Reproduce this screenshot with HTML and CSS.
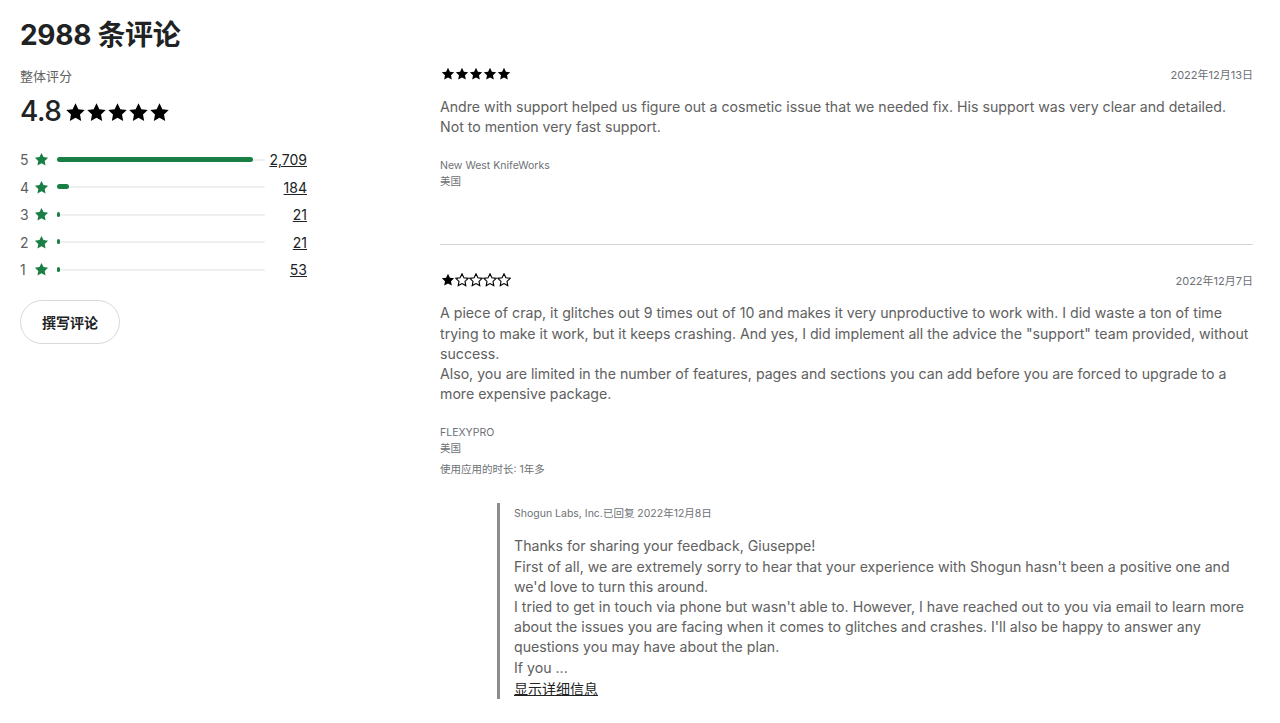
FILE: index.html
```html
<!DOCTYPE html>
<html lang="zh-CN">
<head>
    <meta charset="UTF-8">
    <title>2988 条评论</title>
    <link rel="stylesheet" href="styles.css">
</head>
<body>
    <svg width="0" height="0" class="defs">
        <defs>
            <path id="star" d="M10 1.2l2.7 5.6 6.1.8-4.5 4.3 1.1 6.1L10 15.1 4.6 18l1.1-6.1-4.5-4.3 6.1-.8z"/>
        </defs>
    </svg>

    <div class="page">
        <!-- 左侧：总评分 -->
        <div class="summary">
            <h1 class="title">2988 条评论</h1>
            <p class="overall-label">整体评分</p>
            <div class="overall">
                <span class="score">4.8</span>
                <span class="big-stars">
                    <svg viewBox="0 0 20 20"><use href="#star"/></svg>
                    <svg viewBox="0 0 20 20"><use href="#star"/></svg>
                    <svg viewBox="0 0 20 20"><use href="#star"/></svg>
                    <svg viewBox="0 0 20 20"><use href="#star"/></svg>
                    <svg viewBox="0 0 20 20"><use href="#star"/></svg>
                </span>
            </div>

            <ul class="bars">
                <li class="bar-row">
                    <span class="bar-num">5</span>
                    <svg class="bar-star" viewBox="0 0 20 20"><use href="#star"/></svg>
                    <span class="track"><span class="fill" style="width: 94%"></span></span>
                    <a class="bar-count" href="#">2,709</a>
                </li>
                <li class="bar-row">
                    <span class="bar-num">4</span>
                    <svg class="bar-star" viewBox="0 0 20 20"><use href="#star"/></svg>
                    <span class="track"><span class="fill" style="width: 6%"></span></span>
                    <a class="bar-count" href="#">184</a>
                </li>
                <li class="bar-row">
                    <span class="bar-num">3</span>
                    <svg class="bar-star" viewBox="0 0 20 20"><use href="#star"/></svg>
                    <span class="track"><span class="fill" style="width: 1px"></span></span>
                    <a class="bar-count" href="#">21</a>
                </li>
                <li class="bar-row">
                    <span class="bar-num">2</span>
                    <svg class="bar-star" viewBox="0 0 20 20"><use href="#star"/></svg>
                    <span class="track"><span class="fill" style="width: 1px"></span></span>
                    <a class="bar-count" href="#">21</a>
                </li>
                <li class="bar-row">
                    <span class="bar-num">1</span>
                    <svg class="bar-star" viewBox="0 0 20 20"><use href="#star"/></svg>
                    <span class="track"><span class="fill" style="width: 3px"></span></span>
                    <a class="bar-count" href="#">53</a>
                </li>
            </ul>

            <button class="write-btn">撰写评论</button>
        </div>

        <!-- 右侧：评论列表 -->
        <div class="reviews">
            <div class="review">
                <div class="review-head">
                    <span class="small-stars">
                        <svg viewBox="0 0 20 20"><use href="#star"/></svg>
                        <svg viewBox="0 0 20 20"><use href="#star"/></svg>
                        <svg viewBox="0 0 20 20"><use href="#star"/></svg>
                        <svg viewBox="0 0 20 20"><use href="#star"/></svg>
                        <svg viewBox="0 0 20 20"><use href="#star"/></svg>
                    </span>
                    <span class="date">2022年12月13日</span>
                </div>
                <p class="review-text">Andre with support helped us figure out a cosmetic issue that we needed fix. His support was very clear and detailed. Not to mention very fast support.</p>
                <div class="meta">
                    <div>New West KnifeWorks</div>
                    <div>美国</div>
                </div>
            </div>

            <div class="review second">
                <div class="review-head">
                    <span class="small-stars">
                        <svg viewBox="0 0 20 20"><use href="#star"/></svg>
                        <svg class="empty" viewBox="0 0 20 20"><use href="#star"/></svg>
                        <svg class="empty" viewBox="0 0 20 20"><use href="#star"/></svg>
                        <svg class="empty" viewBox="0 0 20 20"><use href="#star"/></svg>
                        <svg class="empty" viewBox="0 0 20 20"><use href="#star"/></svg>
                    </span>
                    <span class="date">2022年12月7日</span>
                </div>
                <p class="review-text">A piece of crap, it glitches out 9 times out of 10 and makes it very unproductive to work with. I did waste a ton of time trying to make it work, but it keeps crashing. And yes, I did implement all the advice the "support" team provided, without success.<br>Also, you are limited in the number of features, pages and sections you can add before you are forced to upgrade to a more expensive package.</p>
                <div class="meta">
                    <div>FLEXYPRO</div>
                    <div>美国</div>
                    <div class="usage">使用应用的时长: 1年多</div>
                </div>

                <div class="reply">
                    <div class="reply-head">Shogun Labs, Inc.已回复 2022年12月8日</div>
                    <p class="reply-text">Thanks for sharing your feedback, Giuseppe!<br>First of all, we are extremely sorry to hear that your experience with Shogun hasn't been a positive one and we'd love to turn this around.<br>I tried to get in touch via phone but wasn't able to. However, I have reached out to you via email to learn more about the issues you are facing when it comes to glitches and crashes. I'll also be happy to answer any questions you may have about the plan.<br>If you ...</p>
                    <a class="more" href="#">显示详细信息</a>
                </div>
            </div>
        </div>
    </div>
</body>
</html>
```

FILE: styles.css
```css
body {
    margin: 0;
    font-family: Inter, "Noto Sans CJK SC", sans-serif;
    color: #202223;
    background: #fff;
}

.defs {
    position: absolute;
}

.page {
    display: grid;
    grid-template-columns: 287px 1fr;
    column-gap: 133px;
    padding: 0 27px 0 20px;
}

/* 左侧 */
.title {
    font-size: 28px;
    font-weight: 700;
    line-height: 36px;
    margin: 17px 0 14px;
    letter-spacing: -0.3px;
}

.overall-label {
    font-size: 13px;
    color: #616161;
    margin: 0;
    line-height: 18px;
}

.overall {
    display: flex;
    align-items: center;
    margin-top: 9px;
    height: 34px;
}

.score {
    font-size: 28px;
    font-weight: 500;
    letter-spacing: -0.5px;
    margin-right: 4px;
}

.big-stars {
    display: flex;
    margin-top: 3px;
}

.big-stars svg {
    width: 21px;
    height: 21px;
    fill: #000;
}

.bars {
    list-style: none;
    margin: 18px 0 0;
    padding: 0;
}

.bar-row {
    display: flex;
    align-items: center;
    height: 27.5px;
}

.bar-num {
    font-size: 14px;
    color: #5c5f62;
    width: 14px;
}

.bar-star {
    width: 15px;
    height: 15px;
    fill: #1a7f45;
    margin-right: 8px;
}

.track {
    flex: 1;
    height: 2px;
    background: #efefef;
    border-radius: 2px;
    position: relative;
    margin-right: 4px;
}

.fill {
    position: absolute;
    left: 0;
    top: -2px;
    height: 5px;
    min-width: 3px;
    background: #1a7f45;
    border-radius: 3px;
}

.bar-count {
    font-size: 14px;
    color: #202223;
    text-decoration: underline;
    min-width: 38px;
    text-align: right;
}

.write-btn {
    margin-top: 16px;
    width: 100px;
    height: 44px;
    border: 1px solid #d9d9d9;
    border-radius: 22px;
    background: #fff;
    font-family: Inter, "Noto Sans CJK SC", sans-serif;
    font-size: 14px;
    font-weight: 700;
    color: #202223;
    cursor: pointer;
}

/* 右侧 */
.reviews {
    padding-top: 66px;
}

.review {
    padding-bottom: 54px;
}

.review.second {
    border-top: 1px solid #d6d6d6;
    padding-top: 27px;
    padding-bottom: 14px;
}

.review-head {
    display: flex;
    justify-content: space-between;
    align-items: center;
    height: 16px;
}

.small-stars {
    display: flex;
    margin-left: 1px;
}

.small-stars svg {
    width: 14px;
    height: 14px;
    fill: #000;
}

.small-stars svg.empty {
    fill: none;
    stroke: #000;
    stroke-width: 1.6;
}

.date {
    font-size: 11px;
    color: #6d7175;
}

.review-text {
    font-size: 14.15px;
    line-height: 20.2px;
    color: #616161;
    margin: 15px 0 0;
}

.meta {
    margin-top: 21px;
    font-size: 10.5px;
    line-height: 16px;
    color: #6d7175;
}

.usage {
    margin-top: 5px;
}

.reply {
    margin: 25px 0 0 57px;
    border-left: 3px solid #8c8c8c;
    padding: 3px 0 0 14px;
}

.reply-head {
    font-size: 10.5px;
    color: #6d7175;
    line-height: 16px;
}

.reply-text {
    font-size: 14.15px;
    line-height: 20.2px;
    color: #616161;
    margin: 14px 0 0;
}

.more {
    font-size: 14px;
    color: #202223;
    text-decoration: underline;
    line-height: 20px;
}
```
